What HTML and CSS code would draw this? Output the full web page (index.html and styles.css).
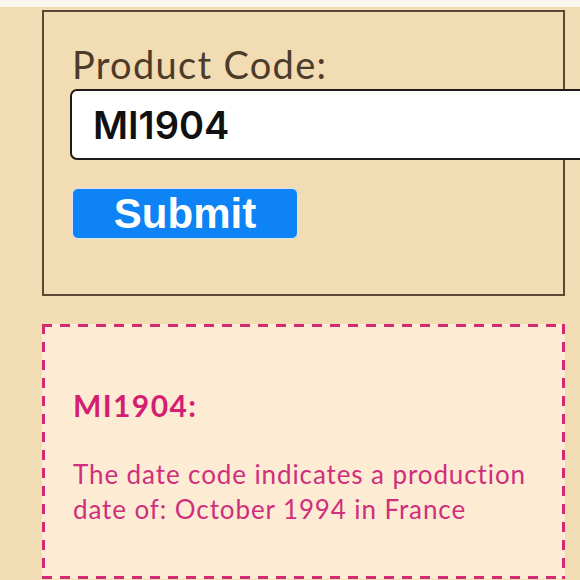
FILE: index.html
```html
<!DOCTYPE html>
<html lang="en">
<head>
<meta charset="utf-8">
<title>Product Code</title>
<link rel="stylesheet" href="styles.css">
</head>
<body>
<div class="page">
  <form class="code-form">
    <label class="code-label" for="code">Product Code:</label>
    <input class="code-input" id="code" type="text" value="MI1904">
    <button class="submit-btn" type="button">Submit</button>
  </form>
  <section class="result">
    <h2 class="result-title">MI1904:</h2>
    <p class="result-text">The date code indicates a production date of: October 1994 in France</p>
  </section>
</div>
</body>
</html>
```

FILE: styles.css
```css
html, body {
  margin: 0;
  padding: 0;
  background: #fbf6ee;
  overflow: hidden;
}

.page {
  margin-top: 7px;
  background: #f2dcb4;
  padding: 3px 15px 20px 42px;
  min-height: 600px;
  font-family: Lato, "Noto Sans", sans-serif;
}

.code-form {
  display: flex;
  flex-direction: column;
  align-items: flex-start;
  border: 2px solid #5b4732;
  padding: 30px 0 55px 28px;
}

.code-label {
  font-size: 38px;
  line-height: 44px;
  letter-spacing: 1.3px;
  color: #4d3b2a;
  font-weight: 400;
}

.code-input {
  box-sizing: border-box;
  margin: 3px 0 0 -2px;
  width: 540px;
  flex-shrink: 0;
  height: 71px;
  border: 2px solid #1f1a16;
  border-radius: 7px;
  background: #fff;
  padding: 0 0 0 21px;
  font-family: Inter, "Liberation Sans", Arial, sans-serif;
  font-weight: 600;
  font-size: 38px;
  color: #111;
  outline: none;
}

.submit-btn {
  box-sizing: border-box;
  margin-top: 28px;
  width: 226px;
  height: 51px;
  flex-shrink: 0;
  border: 1px solid #d6e6f8;
  border-radius: 6px;
  background: #0d83f5;
  color: #fff;
  font-family: "Liberation Sans", Arial, sans-serif;
  font-weight: 700;
  font-size: 42px;
  line-height: 1;
  padding: 0;
}

.result {
  margin-top: 28px;
  padding: 64px 20px 52px 31px;
  color: #cf2f7c;
  background:
    linear-gradient(90deg, #d42a74 10px, transparent 10px) left top / 18px 3px repeat-x,
    linear-gradient(90deg, #d42a74 10px, transparent 10px) left bottom / 18px 3px repeat-x,
    linear-gradient(180deg, #d42a74 10px, transparent 10px) left top / 3px 18px repeat-y,
    linear-gradient(180deg, #d42a74 10px, transparent 10px) right top / 3px 18px repeat-y,
    #fdebd3;
}

.result-title {
  margin: 0;
  font-size: 30px;
  font-weight: 700;
  letter-spacing: 1.4px;
  line-height: 35px;
  color: #d21f72;
}

.result-text {
  margin: 34px 0 0;
  font-size: 26px;
  letter-spacing: 0.9px;
  line-height: 35px;
}
```
